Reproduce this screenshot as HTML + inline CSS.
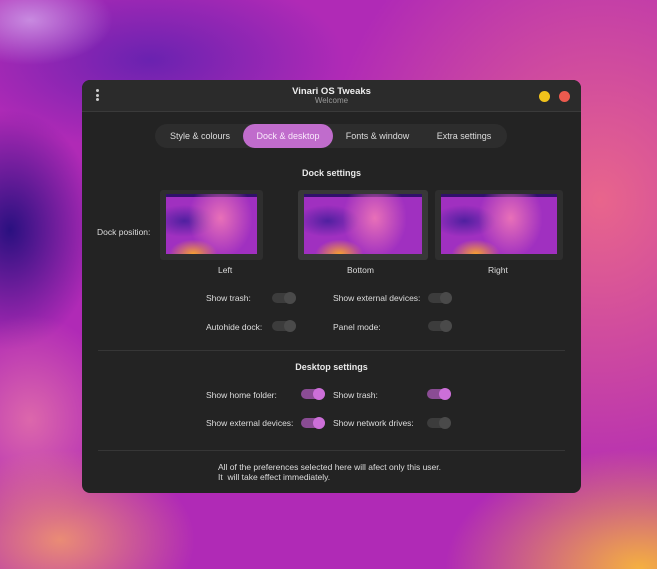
<!DOCTYPE html>
<html><head><style>
body{margin:0;width:657px;height:569px;overflow:hidden;position:relative;font-family:"Liberation Sans",sans-serif;
background:
radial-gradient(ellipse 260px 160px at 640px 569px,#f5b040 0%,rgba(242,140,60,0) 75%),
radial-gradient(ellipse 180px 120px at 60px 540px,rgba(240,150,110,.9) 0%,rgba(230,120,150,0) 75%),
radial-gradient(ellipse 120px 140px at 30px 420px,rgba(225,110,170,.9) 0%,rgba(230,120,150,0) 75%),
radial-gradient(ellipse 110px 60px at 30px 20px,#c88ae0 0%,rgba(200,138,224,0) 75%),
radial-gradient(ellipse 260px 120px at 150px 60px,#6a22b0 0%,rgba(75,26,160,0) 75%),
radial-gradient(ellipse 110px 150px at 10px 230px,#2a1080 0%,rgba(42,16,128,0) 80%),
radial-gradient(ellipse 400px 450px at 600px 200px,#e8658c 0%,rgba(224,96,138,0) 70%),
#b02ab6;}
.win{position:absolute;left:82px;top:80px;width:499px;height:413px;background:#232323;border-radius:8px;overflow:hidden;color:#ddd;font-size:9px}
.tb{height:31px;background:#2b2b2b;border-bottom:1px solid #3a3a3a;position:relative;text-align:center}
.t1{position:absolute;top:6px;left:0;right:0;font-weight:bold;font-size:9.5px;color:#eee}
.t2{position:absolute;top:16px;left:0;right:0;font-size:8px;color:#999}
.dots{position:absolute;left:14px;top:9px;width:3px}
.dots i{display:block;width:3px;height:3px;background:#ccc;border-radius:50%;margin-bottom:1.5px}
.c{position:absolute;top:11px;width:11px;height:11px;border-radius:50%}
.tabs{position:absolute;left:73px;top:44px;width:352px;height:24px;background:#2d2d2d;border-radius:12px}
.tab{position:absolute;top:0;height:24px;line-height:24px;font-size:9px;color:#ddd;text-align:center}
.sel{background:#c06ccc;border-radius:12px;color:#fbeafd}
.h{position:absolute;left:0;right:0;text-align:center;font-weight:bold;font-size:9px;color:#e8e8e8}
.th{position:absolute;top:110px;height:70px;border-radius:3px;background:#2e2e2e;padding:0}
.th div{position:absolute;left:6px;right:6px;top:4px;bottom:6px;
background:radial-gradient(ellipse 30px 18px at 30% 100%,#f6a030,rgba(246,160,48,0) 80%),radial-gradient(ellipse 40px 50px at 60% 40%,#e870b8,rgba(240,122,176,0) 80%),radial-gradient(ellipse 40px 20px at 20% 45%,#5020a0,rgba(80,32,160,0) 80%),linear-gradient(#30106a 0,#30106a 3px,#a030c0 3px)}
.l{position:absolute;font-size:8.5px;color:#ddd}
.tg{position:absolute;width:24px;height:10px;border-radius:5px;background:#3c3c3c}
.tg::after{content:"";position:absolute;right:0;top:-1px;width:12px;height:12px;border-radius:50%;background:#4a4a4a}
.on{background:#8a4c94}.on::after{background:#cc6fd8}
.sep{position:absolute;left:16px;right:16px;height:1px;background:#363636}
</style></head><body>
<div class="win">
<div class="tb"><div class="dots"><i></i><i></i><i></i></div>
<div class="t1">Vinari OS Tweaks</div><div class="t2">Welcome</div>
<div class="c" style="left:457px;background:#f1c21b"></div><div class="c" style="left:477px;background:#ec5a4e"></div></div>
<div class="tabs">
<div class="tab" style="left:6px;width:78px">Style &amp; colours</div>
<div class="tab sel" style="left:88px;width:90px">Dock &amp; desktop</div>
<div class="tab" style="left:180px;width:85px">Fonts &amp; window</div>
<div class="tab" style="left:268px;width:82px">Extra settings</div></div>
<div class="h" style="top:88px">Dock settings</div>
<div class="l" style="left:15px;top:147px">Dock position:</div>
<div class="th" style="left:78px;width:103px"><div></div></div>
<div class="th" style="left:216px;width:130px;background:#383838"><div></div></div>
<div class="th" style="left:353px;width:128px"><div></div></div>
<div class="l" style="left:136px;top:185px">Left</div>
<div class="l" style="left:265px;top:185px">Bottom</div>
<div class="l" style="left:406px;top:185px">Right</div>
<div class="l" style="left:124px;top:213px">Show trash:</div><div class="tg" style="left:190px;top:213px"></div>
<div class="l" style="left:251px;top:213px">Show external devices:</div><div class="tg" style="left:346px;top:213px"></div>
<div class="l" style="left:124px;top:242px">Autohide dock:</div><div class="tg" style="left:190px;top:241px"></div>
<div class="l" style="left:251px;top:242px">Panel mode:</div><div class="tg" style="left:346px;top:241px"></div>
<div class="sep" style="top:270px"></div>
<div class="h" style="top:282px">Desktop settings</div>
<div class="l" style="left:124px;top:310px">Show home folder:</div><div class="tg on" style="left:219px;top:309px"></div>
<div class="l" style="left:251px;top:310px">Show trash:</div><div class="tg on" style="left:345px;top:309px"></div>
<div class="l" style="left:124px;top:338px">Show external devices:</div><div class="tg on" style="left:219px;top:338px"></div>
<div class="l" style="left:251px;top:338px">Show network drives:</div><div class="tg" style="left:345px;top:338px"></div>
<div class="sep" style="top:370px"></div>
<div class="l" style="left:136px;top:382px;line-height:10px">All of the preferences selected here will afect only this user.<br>It &nbsp;will take effect immediately.</div>
</div>
</body></html>
